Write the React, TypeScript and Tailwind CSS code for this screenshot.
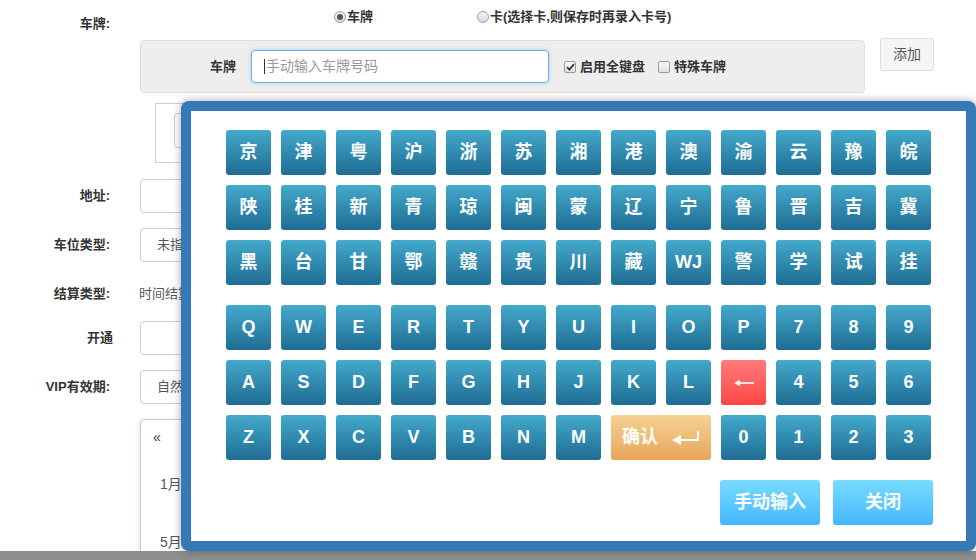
import React from "react";

const CN_ROWS = [
  ["京", "津", "粤", "沪", "浙", "苏", "湘", "港", "澳", "渝", "云", "豫", "皖"],
  ["陕", "桂", "新", "青", "琼", "闽", "蒙", "辽", "宁", "鲁", "晋", "吉", "冀"],
  ["黑", "台", "甘", "鄂", "赣", "贵", "川", "藏", "WJ", "警", "学", "试", "挂"],
];

const FONT = "font-['Liberation_Sans','Noto_Sans_CJK_SC',sans-serif]";

function Key({ label }: { label: React.ReactNode }) {
  return (
    <div className="flex h-[45px] w-[45px] items-center justify-center rounded-[3px] bg-linear-to-b from-[#43aacb] to-[#1f6c94] text-[18px] font-bold text-white">
      {label}
    </div>
  );
}

function Radio({ checked }: { checked?: boolean }) {
  return (
    <span className="flex h-[12px] w-[12px] items-center justify-center rounded-full border border-[#a0a0a0] bg-linear-to-b from-[#f4f4f4] to-[#dcdcdc]">
      {checked && <span className="h-[6px] w-[6px] rounded-full bg-[#555]" />}
    </span>
  );
}

function Checkbox({ checked }: { checked?: boolean }) {
  return (
    <span className="flex h-[12px] w-[12px] items-center justify-center rounded-[2px] border border-[#9a9a9a] bg-linear-to-b from-[#fafafa] to-[#e2e2e2]">
      {checked && (
        <svg width="9" height="8" viewBox="0 0 9 8">
          <path d="M1 4.2 L3.4 6.6 L8 1.2" fill="none" stroke="#333" strokeWidth="1.8" />
        </svg>
      )}
    </span>
  );
}

function Label({ children, className = "" }: { children: React.ReactNode; className?: string }) {
  return <div className={`w-[110px] shrink-0 text-right font-bold text-[#333] ${className}`}>{children}</div>;
}

function Keyboard() {
  return (
    <div className="absolute left-[181px] top-[101px] h-[450px] w-[795px] rounded-[8px] bg-[#3579b6] p-[10px] shadow-[0_0_8px_rgba(0,0,0,0.35)]">
      <div className="h-full w-full bg-white pl-[35px] pt-[19px]">
        <div className="flex flex-col gap-[10px]">
          {CN_ROWS.map((row, i) => (
            <div key={i} className="flex gap-[10px]">
              {row.map((k) => (
                <Key key={k} label={k} />
              ))}
            </div>
          ))}
          <div className="mt-[10px] flex gap-[10px] text-[17px]">
            {["Q", "W", "E", "R", "T", "Y", "U", "I", "O", "P", "7", "8", "9"].map((k) => (
              <Key key={k} label={k} />
            ))}
          </div>
          <div className="flex gap-[10px]">
            {["A", "S", "D", "F", "G", "H", "J", "K", "L"].map((k) => (
              <Key key={k} label={k} />
            ))}
            <div className="flex h-[45px] w-[45px] items-center justify-center rounded-[3px] bg-linear-to-b from-[#ff7a7a] to-[#ff4343]">
              <svg width="20" height="8" viewBox="0 0 20 8">
                <path d="M0 4 L6 0.8 L6 7.2 Z" fill="#fff" />
                <path d="M5 4 H20" stroke="#fff" strokeWidth="1.6" />
              </svg>
            </div>
            {["4", "5", "6"].map((k) => (
              <Key key={k} label={k} />
            ))}
          </div>
          <div className="flex gap-[10px]">
            {["Z", "X", "C", "V", "B", "N", "M"].map((k) => (
              <Key key={k} label={k} />
            ))}
            <div className="flex h-[45px] w-[100px] items-center justify-center gap-[14px] rounded-[3px] bg-linear-to-b from-[#f6d293] to-[#e8a55a] text-[18px] font-bold text-white">
              <span>确认</span>
              <svg width="28" height="16" viewBox="0 0 28 16">
                <path d="M0 10 L9 5 L9 15 Z" fill="#fff" />
                <path d="M8 10 H26 V1" fill="none" stroke="#fff" strokeWidth="2" />
              </svg>
            </div>
            {["0", "1", "2", "3"].map((k) => (
              <Key key={k} label={k} />
            ))}
          </div>
        </div>
        <div className="ml-[494px] mt-[20px] flex gap-[13px] text-[18px] font-bold text-white">
          <div className="flex h-[45px] w-[100px] items-center justify-center rounded-[3px] bg-linear-to-b from-[#78dcff] to-[#43b7ff]">
            手动输入
          </div>
          <div className="flex h-[45px] w-[100px] items-center justify-center rounded-[3px] bg-linear-to-b from-[#78dcff] to-[#43b7ff]">
            关闭
          </div>
        </div>
      </div>
    </div>
  );
}

export default function App() {
  return (
    <div className={`relative h-[560px] w-[976px] overflow-hidden bg-white text-[13px] text-[#333] ${FONT}`}>
      <div className="flex flex-col">
        {/* 车牌 radios */}
        <div className="flex h-[40px]">
          <Label className="pt-[15px] leading-[18px]">车牌:</Label>
          <div className="ml-[224px] flex items-start pt-[8px] leading-[18px]">
            <span className="flex items-center gap-[1px]">
              <Radio checked />
              <span className="font-bold">车牌</span>
            </span>
            <span className="ml-[104px] flex items-center gap-[1px]">
              <Radio />
              <span className="font-bold">卡(选择卡,则保存时再录入卡号)</span>
            </span>
          </div>
        </div>

        {/* plate input box */}
        <div className="flex">
          <div className="ml-[140px] flex h-[53px] w-[725px] items-center rounded-[4px] border border-[#dedede] bg-[#eeeeee]">
            <span className="ml-[69px] w-[28px] font-bold">车牌</span>
            <div className="relative ml-[13px] flex h-[33px] w-[298px] items-center rounded-[4px] border border-[#66afe9] bg-white pl-[12px] text-[14px] text-[#999] shadow-[0_0_4px_rgba(102,175,233,0.5)]">
              <span className="mr-[1px] h-[15px] w-[1px] bg-[#333]" />
              手动输入车牌号码
            </div>
            <span className="ml-[15px] flex items-center gap-[4px] font-bold">
              <Checkbox checked />
              启用全键盘
            </span>
            <span className="ml-[13px] flex items-center gap-[4px] font-bold">
              <Checkbox />
              特殊车牌
            </span>
          </div>
          <div className="ml-[15px] -mt-[2px] flex h-[33px] w-[54px] items-center justify-center rounded-[3px] border border-[#ddd] bg-[#f5f5f5] text-[14px] text-[#555]">
            添加
          </div>
        </div>

        {/* table box */}
        <div className="ml-[155px] mt-[10px] h-[60px] w-[300px] border border-[#cfcfcf] pl-[18px] pt-[9px]">
          <div className="h-[35px] w-[60px] rounded-[4px] border border-[#ccc]" />
        </div>

        {/* 地址 */}
        <div className="mt-[16px] flex items-center">
          <Label>地址:</Label>
          <div className="ml-[30px] h-[34px] w-[300px] rounded-[4px] border border-[#ccc]" />
        </div>

        {/* 车位类型 */}
        <div className="mt-[15px] flex items-center">
          <Label>车位类型:</Label>
          <div className="ml-[30px] flex h-[34px] w-[300px] items-center rounded-[4px] border border-[#ccc] pl-[16px] text-[#555]">
            未指定
          </div>
        </div>

        {/* 结算类型 */}
        <div className="mt-[15px] flex h-[34px] items-center">
          <Label>结算类型:</Label>
          <span className="ml-[29px] text-[#555]">时间结算</span>
        </div>

        {/* 开通 */}
        <div className="mt-[10px] flex items-center">
          <Label>
            <span className="relative left-[3px]">开通</span>
          </Label>
          <div className="ml-[30px] h-[34px] w-[300px] rounded-[4px] border border-[#ccc]" />
        </div>

        {/* VIP有效期 */}
        <div className="mt-[15px] flex items-center">
          <Label>VIP有效期:</Label>
          <div className="ml-[30px] flex h-[34px] w-[300px] items-center rounded-[4px] border border-[#ccc] pl-[16px] text-[#555]">
            自然月
          </div>
        </div>

        {/* calendar */}
        <div className="ml-[140px] mt-[15px] h-[140px] w-[300px] rounded-t-[4px] border border-[#ccc] shadow-[0_2px_6px_rgba(0,0,0,0.15)]">
          <div className="ml-[12px] mt-[8px] text-[14px] leading-[18px]">«</div>
          <div className="ml-[19px] mt-[29px] text-[14px] leading-[18px] text-[#555]">1月</div>
          <div className="ml-[19px] mt-[40px] text-[14px] leading-[18px] text-[#555]">5月</div>
        </div>
      </div>

      <div className="absolute bottom-0 left-0 h-[9px] w-full bg-[#8e8e8e]" />
      <Keyboard />
    </div>
  );
}
